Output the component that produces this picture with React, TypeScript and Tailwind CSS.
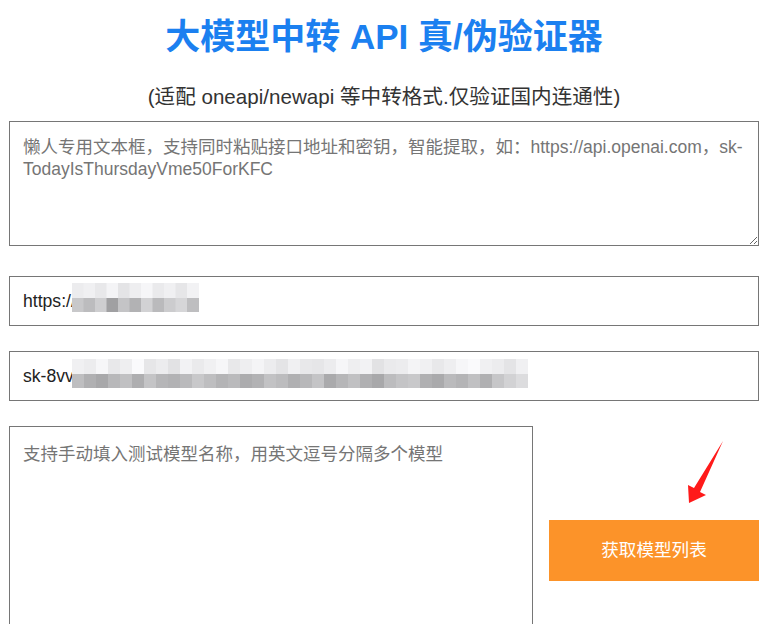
import React from "react";

const top1 = [236, 240, 232, 244, 228, 238, 246, 234, 240, 230, 242];
const bot1 = [200, 188, 206, 160, 196, 178, 210, 186, 204, 214, 190];
const top2 = [
  240, 236, 246, 232, 238, 250, 230, 236, 226, 242, 234, 240, 246, 232, 238, 244, 236, 228, 240, 232,
  230, 236, 246, 238, 242, 226, 234, 236, 244, 240, 232, 238, 246, 250, 240, 236, 228, 240,
];
const bot2 = [
  190, 176, 168, 184, 192, 174, 196, 182, 178, 186, 200, 190, 180, 186, 172, 178, 194, 188, 176, 184,
  196, 170, 182, 192, 176, 168, 188, 196, 200, 176, 170, 186, 180, 192, 176, 198, 210, 220,
];

function Mosaic({ top, bot, w = 12 }: { top: number[]; bot: number[]; w?: number }) {
  return (
    <svg width={top.length * w} height={29} className="block">
      {top.map((v, i) => (
        <rect key={"t" + i} x={i * w} y={0} width={w + 0.5} height={15} fill={`rgb(${v},${v},${v + 2})`} />
      ))}
      {bot.map((v, i) => (
        <rect key={"b" + i} x={i * w} y={15} width={w + 0.5} height={14} fill={`rgb(${v},${v},${v + 2})`} />
      ))}
    </svg>
  );
}

export default function App() {
  return (
    <div className="relative w-[777px] min-h-[624px] bg-white overflow-hidden font-['Liberation_Sans','Noto_Sans_CJK_SC',sans-serif]">
      <div className="flex flex-col pl-[9px]">
        <h1 className="pt-[17px] w-[750px] text-center text-[35px] leading-[40px] font-bold text-[#1b80f0]">
          大模型中转 API 真/伪验证器
        </h1>
        <p className="mt-[26px] w-[750px] text-center text-[20.6px] leading-[28px] text-[#333]">
          (适配 oneapi/newapi 等中转格式.仅验证国内连通性)
        </p>
        <textarea
          className="mt-[10px] w-[750px] h-[125px] border border-[#767676] pl-[13px] pr-[8px] py-[14px] text-[17.5px] leading-[22px] text-[#222] placeholder:text-[#757575] outline-none"
          placeholder="懒人专用文本框，支持同时粘贴接口地址和密钥，智能提取，如：https://api.openai.com，sk-TodayIsThursdayVme50ForKFC"
        />
        <div className="relative mt-[30px] w-[750px]">
          <input
            className="w-[750px] h-[50px] border border-[#767676] px-[13px] text-[17.6px] text-[#222] outline-none"
            defaultValue="https://"
          />
          <div className="absolute left-[63px] top-[7px]">
            <Mosaic top={top1} bot={bot1} w={11.5} />
          </div>
        </div>
        <div className="relative mt-[25px] w-[750px]">
          <input
            className="w-[750px] h-[50px] border border-[#767676] px-[13px] text-[17.6px] text-[#222] outline-none"
            defaultValue="sk-8vv"
          />
          <div className="absolute left-[63px] top-[8px]">
            <Mosaic top={top2} bot={bot2} />
          </div>
        </div>
        <div className="mt-[25px] flex items-center gap-[16px]">
          <textarea
            className="w-[524px] h-[249px] border border-[#767676] px-[13px] py-[16px] text-[17.5px] leading-[22px] text-[#222] placeholder:text-[#757575] outline-none resize-none"
            placeholder="支持手动填入测试模型名称，用英文逗号分隔多个模型"
          />
          <button className="w-[210px] h-[61px] bg-[#fc9329] text-white text-[17.6px]">获取模型列表</button>
        </div>
      </div>
      <svg className="absolute left-[680px] top-[436px]" width="50" height="72" viewBox="680 436 50 72">
        <polygon points="689,503 688,485 694,488 723,441 700,492 706,495" fill="#ff1a1a" />
      </svg>
    </div>
  );
}
